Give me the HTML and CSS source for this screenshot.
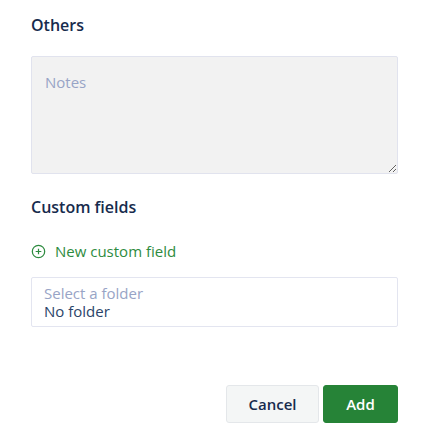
FILE: index.html
```html
<!DOCTYPE html>
<html>
<head>
<meta charset="utf-8">
<link rel="stylesheet" href="styles.css">
</head>
<body>
<div class="panel">
  <h2 class="heading">Others</h2>
  <textarea class="notes" placeholder="Notes"></textarea>
  <h2 class="heading heading-custom">Custom fields</h2>
  <a class="add-field" href="#">
    <svg class="plus" width="15" height="15" viewBox="0 0 16 16"><circle cx="8" cy="8" r="6.6" fill="none" stroke="currentColor" stroke-width="1.3"/><path d="M8 5v6M5 8h6" stroke="currentColor" stroke-width="1.3"/></svg>
    <span>New custom field</span>
  </a>
  <div class="select">
    <div class="select-label">Select a folder</div>
    <div class="select-value">No folder</div>
  </div>
  <div class="actions">
    <button class="btn btn-cancel">Cancel</button>
    <button class="btn btn-add">Add</button>
  </div>
</div>
</body>
</html>
```
FILE: styles.css
```css
html, body {
  margin: 0;
  padding: 0;
  background: #ffffff;
}
body {
  font-family: "Open Sans", "Noto Sans", sans-serif;
}
.panel {
  padding: 14px 29px 0 31px;
  display: flex;
  flex-direction: column;
}
.heading {
  margin: 0;
  font-size: 16px;
  font-weight: 600;
  color: #172b4d;
  line-height: 22px;
}
.notes {
  margin-top: 20px;
  height: 118px;
  box-sizing: border-box;
  width: 100%;
  background: #f2f2f2;
  border: 1px solid #e1e3ee;
  border-radius: 2px;
  padding: 15px 13px;
  font-family: inherit;
  font-size: 15px;
  color: #172b4d;
  resize: vertical;
  display: block;
}
.notes::placeholder {
  color: #98a4c6;
}
.heading-custom {
  margin-top: 22px;
}
.add-field {
  margin-top: 23px;
  display: flex;
  align-items: center;
  gap: 9px;
  color: #2e8b40;
  text-decoration: none;
  font-size: 15px;
  line-height: 20px;
}
.plus {
  display: block;
}
.select {
  margin-top: 16px;
  height: 50px;
  box-sizing: border-box;
  border: 1px solid #e3e5f0;
  border-radius: 2px;
  padding: 6px 12px;
  font-size: 15px;
  line-height: 18px;
}
.select-label {
  color: #98a4c6;
}
.select-value {
  color: #2b4469;
}
.actions {
  margin-top: 58px;
  display: flex;
  justify-content: flex-end;
  gap: 4px;
}
.btn {
  height: 38px;
  border-radius: 3px;
  font-family: inherit;
  font-size: 15px;
  font-weight: 600;
  cursor: pointer;
}
.btn-cancel {
  width: 93px;
  background: #f4f6f6;
  border: 1px solid #e4e7ea;
  color: #172b4d;
}
.btn-add {
  width: 75px;
  background: #268337;
  border: 1px solid #268337;
  color: #ffffff;
}
```
